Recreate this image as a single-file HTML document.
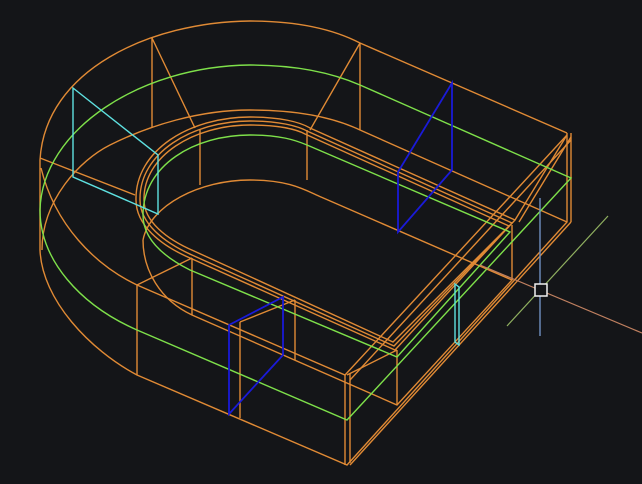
<!DOCTYPE html>
<html><head><style>html,body{margin:0;padding:0;background:#141518;}svg{display:block}</style></head>
<body>
<svg width="642" height="484" viewBox="0 0 642 484" xmlns="http://www.w3.org/2000/svg">
<rect width="642" height="484" fill="#141518"/>
<g fill="none" stroke="#e08a35" stroke-width="1.4">
<path d="M40,160 C45,70 150,22 250,21 C300,21 335,30 360,43 L567,133"/>
<path d="M40,160 L40,250 C42,300 90,350 137,375 L347,465 L567,222 L567,133"/>
<path d="M42,250 C42,200 80,160 110,145 C150,125 200,110 250,110 C300,110 335,118 360,130 L567,222"/>
<path d="M41,168 C55,225 95,265 137,285"/>
<path d="M40,158 L135,195 M137,285 L345,375 L567,135"/>
<path d="M152,38 L152,127 M152,38 L195,128 M360,43 L360,130 M360,43 L310,130"/>
<path d="M200,130 L200,185 M307,130 L307,180 M137,285 L137,375 M192,258 L192,315 M240,322 L240,418 M295,300 L295,360 M397,350 L397,405 M512,225 L512,280 M345,375 L345,465 M350,373 L350,463 M571,133 L571,222"/>
<path d="M137,285 L192,258 M240,322 L295,300"/>
<path d="M136,200 C135,150 190,117 250,117 C280,117 300,122 310,128 L515,220 L395,350 L190,258 C160,245 136,225 136,200"/>
<path d="M140,200 C139,153 192,121 250,121 C279,121 298,126 307,131 L512,223 L394,346 L192,255 C163,242 140,223 140,200"/>
<path d="M144,200 C143,156 194,125 250,125 C278,125 296,129 305,134 L509,226 L393,342 L194,251 C166,239 144,221 144,200"/>
<path d="M143,240 C150,205 200,180 250,180 C290,180 305,190 321,197 L512,280 L397,405 L192,315 C160,300 143,270 143,240"/>
<path d="M347,375 L397,350 M515,220 L567,135 M519,222 L571,137"/>
<path d="M350,465 L571,222 M350,380 L571,140"/>
</g>
<g fill="none" stroke="#7ee04a" stroke-width="1.4">
<path d="M40,210 C42,130 140,66 250,65 C300,65 335,74 360,85 L571,178 L347,420 L137,330 C80,305 40,260 40,210 Z"/>
<path d="M143,215 C143,165 195,135 250,135 C280,135 295,140 307,145 L510,232 L397,357 L190,270 C160,255 143,237 143,215 Z"/>
</g>
<g fill="none" stroke="#1a1ad8" stroke-width="1.8">
<path d="M452,83 L452,170 L398,232 L398,172 Z"/>
<path d="M283,297 L283,355 L229,414 L229,325 Z"/>
</g>
<g fill="none" stroke="#5ee0e0" stroke-width="1.4">
<path d="M73,88 L158,155 L158,214 L73,177 Z"/>
<path d="M455,284 L459,287 L459,345 L455,342 Z"/>
</g>
<line x1="480" y1="265" x2="642" y2="333" stroke="#c08060" stroke-width="1.2"/>
<line x1="507" y1="326" x2="608" y2="216" stroke="#90b060" stroke-width="1.2"/>
<line x1="540" y1="198" x2="540" y2="336" stroke="#7090c0" stroke-width="1.4"/>
<rect x="535" y="284" width="12" height="12" fill="#141518" stroke="#f0f0f0" stroke-width="1.5"/>
</svg>
</body></html>
